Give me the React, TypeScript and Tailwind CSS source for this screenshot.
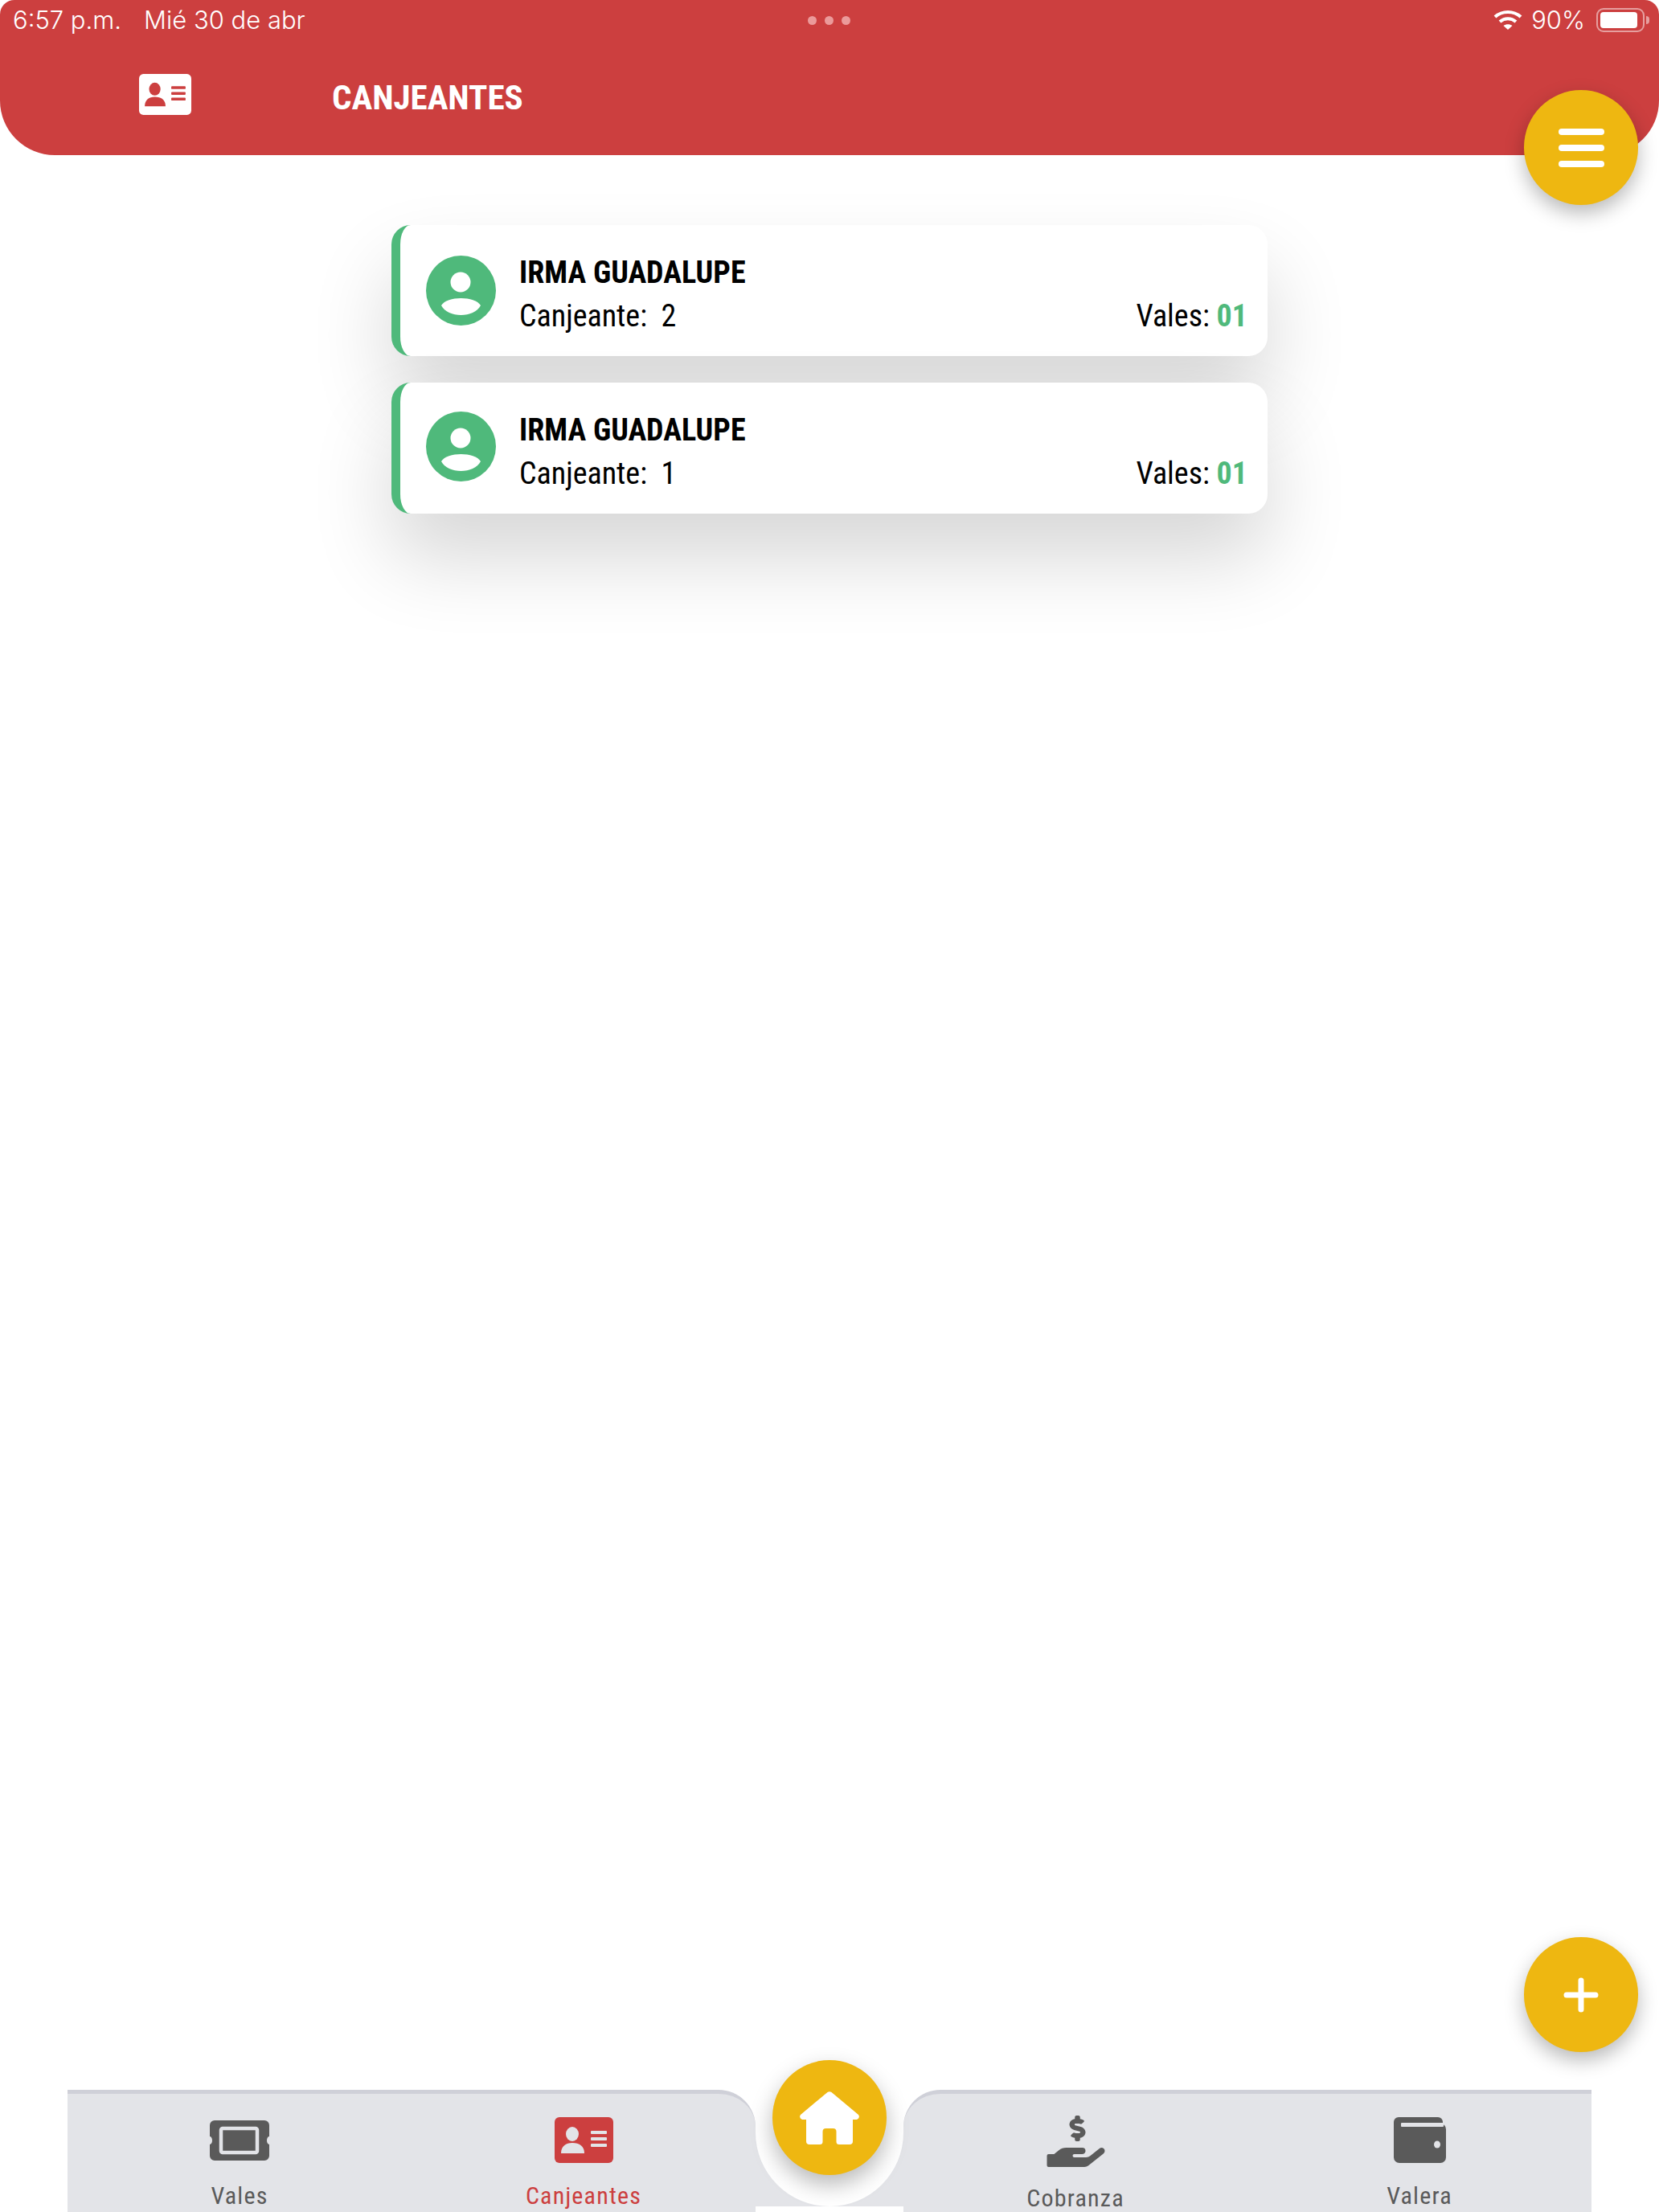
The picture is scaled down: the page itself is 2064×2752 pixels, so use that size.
import { FaHandHoldingUsd } from 'react-icons/fa'

const condensed = "font-['Roboto_Condensed','Roboto',sans-serif] [font-stretch:75%]"

function IdCardIcon({ className, fg, cut }: { className: string; fg: string; cut: string }) {
  return (
    <svg viewBox="0 0 73 57" className={className}>
      <rect width="73" height="57" rx="6" fill={fg} />
      <ellipse cx="22" cy="21" rx="8" ry="9" fill={cut} />
      <path d="M8 45 C8 36 14 32 22 32 C31 32 37 36 37 45 Z" fill={cut} />
      <rect x="45" y="17" width="20" height="4" rx="1" fill={cut} />
      <rect x="45" y="25" width="20" height="4" rx="1" fill={cut} />
      <rect x="45" y="33" width="20" height="4" rx="1" fill={cut} />
    </svg>
  )
}

function TicketIcon() {
  return (
    <svg viewBox="0 0 74 50" className="w-[74px] h-[50px]">
      <path
        d="M6 0 H68 a6 6 0 0 1 6 6 V20 a3 5 0 0 0 0 10 V44 a6 6 0 0 1 -6 6 H6 a6 6 0 0 1 -6 -6 V30 a3 5 0 0 0 0 -10 V6 a6 6 0 0 1 6 -6 Z"
        fill="#5a5a5a"
      />
      <rect x="14" y="10" width="45" height="30" rx="2" fill="none" stroke="#e3e4e8" strokeWidth="4.5" />
    </svg>
  )
}

function WalletIcon() {
  return (
    <svg viewBox="0 0 65 57" className="w-[65px] h-[57px]">
      <rect width="61" height="30" rx="6" fill="#5a5a5a" />
      <rect y="8" width="65" height="49" rx="7" fill="#5a5a5a" />
      <rect x="9" y="7" width="53" height="5" rx="1" fill="#e3e4e8" />
      <ellipse cx="54" cy="34" rx="4" ry="4.5" fill="#e3e4e8" />
    </svg>
  )
}

function HomeIcon() {
  return (
    <svg viewBox="0 0 74 66" className="w-[74px] h-[66px] overflow-visible">
      <path
        d="M34.5 1 Q37 -0.5 39.5 1 L73 29 Q75.5 33 71 35 L66 35 V62 Q66 66 62 66 H49 Q45.5 66 45.5 62.5 V50 Q45.5 46 41.5 46 H32.5 Q28.5 46 28.5 50 V62.5 Q28.5 66 25 66 H12 Q8 66 8 62 V35 H3 Q-1.5 33 1 29 Z"
        fill="#ffffff"
      />
    </svg>
  )
}

function Avatar({ className }: { className?: string }) {
  return (
    <svg viewBox="0 0 87 87" className={`w-[87px] h-[87px] shrink-0 ${className ?? ''}`}>
      <circle cx="43.5" cy="43.5" r="43.5" fill="#4fb97b" />
      <circle cx="43" cy="33" r="12.5" fill="#ffffff" />
      <path d="M19 62 C26 50 61 50 68 62 C60 78 27 78 19 62 Z" fill="#ffffff" />
    </svg>
  )
}

function WifiIcon() {
  return (
    <svg viewBox="0 0 36 26" className="w-[36px] h-[26px]" fill="none" stroke="#ffffff" strokeWidth="4.2">
      <path d="M2 9 C11 1 25 1 34 9" />
      <path d="M8 15 C14 10 22 10 28 15" />
      <path d="M18 25 L12.5 20 C15.5 17.5 20.5 17.5 23.5 20 Z" fill="#ffffff" stroke="none" />
    </svg>
  )
}

function StatusBar() {
  return (
    <div className="relative flex items-center justify-between h-[50px] pl-[16px] pr-[12px] text-white text-[31px] font-['Inter',sans-serif] font-[350]">
      <div className="flex gap-[28px]">
        <span>6:57 p.m.</span>
        <span>Mié 30 de abr</span>
      </div>
      <div className="absolute left-[1005px] top-[20px] flex gap-[10px]">
        <span className="w-[11px] h-[11px] rounded-full bg-[#eb9a9a]" />
        <span className="w-[11px] h-[11px] rounded-full bg-[#eb9a9a]" />
        <span className="w-[11px] h-[11px] rounded-full bg-[#eb9a9a]" />
      </div>
      <div className="flex items-center">
        <WifiIcon />
        <span className="ml-[11px] mr-[14px]">90%</span>
        <div className="w-[60px] h-[30px] rounded-[9px] border-2 border-white/50 p-[3px]">
          <div className="w-[46px] h-full rounded-[4px] bg-white" />
        </div>
        <div className="w-[4px] h-[10px] ml-[2px] rounded-r-full bg-white/50" />
      </div>
    </div>
  )
}

function PersonCard({ name, num, avatarClass }: { name: string; num: string; avatarClass?: string }) {
  return (
    <div className="flex items-center h-[163px] rounded-[24px] border-l-[11px] border-[#4fb97b] bg-white pl-[32px] pr-[25px] shadow-[0_55px_100px_rgba(0,0,0,0.16)]">
      <Avatar className={avatarClass} />
      <div className={`flex-1 ml-[29px] pt-[9px] text-black text-[38px] leading-[54px] ${condensed}`}>
        <div className="font-bold">{name}</div>
        <div className="flex justify-between">
          <span className="whitespace-pre">Canjeante:  {num}</span>
          <span>
            Vales: <span className="font-bold text-[#4fb97b]">01</span>
          </span>
        </div>
      </div>
    </div>
  )
}

function NavItem({ label, active, children }: { label: string; active?: boolean; children: React.ReactNode }) {
  return (
    <div className="flex-1 flex flex-col items-center pt-[27px]">
      <div className="h-[64px] flex items-center justify-center">{children}</div>
      <span className={`mt-[19px] text-[30px] leading-[40px] tracking-[0.04em] ${condensed} ${active ? 'text-[#cc3f3f]' : 'text-[#5a5a5a]'}`}>
        {label}
      </span>
    </div>
  )
}

export default function App() {
  return (
    <div className="relative flex flex-col w-[2064px] h-[2752px] overflow-hidden bg-white">
      <header className="h-[193px] bg-[#cc3f3f] rounded-t-[18px] rounded-b-[68px]">
        <StatusBar />
        <div className="flex items-center pl-[173px] pt-[40px]">
          <IdCardIcon className="w-[65px] h-[51px]" fg="#ffffff" cut="#cc3f3f" />
          <h1 className={`ml-[175px] mt-[7px] text-white text-[43px] leading-[48px] font-bold ${condensed}`}>CANJEANTES</h1>
        </div>
      </header>

      <main className="w-[1090px] mx-auto mt-[87px] flex flex-col gap-[33px]">
        <PersonCard name="IRMA GUADALUPE" num="2" />
        <PersonCard name="IRMA GUADALUPE" num="1" avatarClass="mb-[4px]" />
      </main>

      <nav className="mt-auto mx-[84px] h-[152px] flex">
        <div className="flex-1 flex bg-[#e3e4e8] border-t-[5px] border-[#cfd0d8] rounded-tr-[46px]">
          <NavItem label="Vales"><TicketIcon /></NavItem>
          <NavItem label="Canjeantes" active>
            <IdCardIcon className="w-[73px] h-[57px]" fg="#cc3f3f" cut="#e3e4e8" />
          </NavItem>
        </div>
        <div className="w-[184px] flex flex-col bg-[#e3e4e8]">
          <div className="h-[145px] bg-white rounded-b-[92px]" />
          <div className="h-[7px] bg-white" />
        </div>
        <div className="flex-1 flex bg-[#e3e4e8] border-t-[5px] border-[#cfd0d8] rounded-tl-[46px]">
          <NavItem label="Cobranza"><FaHandHoldingUsd className="w-[75px] h-[64px] text-[#5a5a5a]" /></NavItem>
          <NavItem label="Valera"><WalletIcon /></NavItem>
        </div>
      </nav>

      <button className="absolute left-[1896px] top-[112px] w-[142px] h-[143px] rounded-full bg-[#eeb711] flex flex-col items-center justify-center gap-[12px] shadow-[0_10px_24px_rgba(0,0,0,0.28)]">
        <span className="w-[57px] h-[8px] rounded-full bg-white" />
        <span className="w-[57px] h-[8px] rounded-full bg-white" />
        <span className="w-[57px] h-[8px] rounded-full bg-white" />
      </button>

      <button className="absolute left-[1896px] top-[2410px] w-[142px] h-[143px] rounded-full bg-[#eeb711] flex items-center justify-center shadow-[0_10px_24px_rgba(0,0,0,0.28)]">
        <svg viewBox="0 0 44 44" className="w-[44px] h-[44px]" stroke="#ffffff" strokeWidth="7" strokeLinecap="round">
          <path d="M22 4 V40 M4 22 H40" />
        </svg>
      </button>

      <button className="absolute left-[961px] top-[2563px] w-[142px] h-[143px] rounded-full bg-[#eeb711] flex items-center justify-center shadow-[0_12px_28px_rgba(0,0,0,0.28)]">
        <HomeIcon />
      </button>
    </div>
  )
}
